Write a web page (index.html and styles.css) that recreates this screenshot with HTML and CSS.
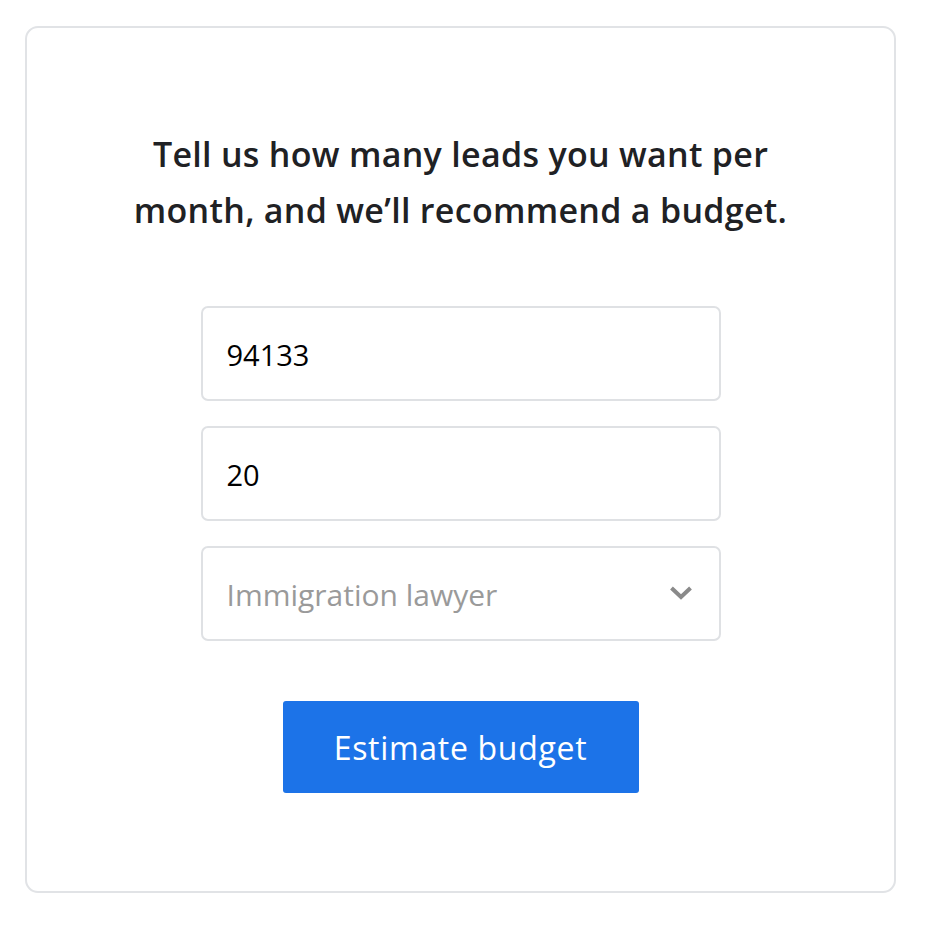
FILE: index.html
```html
<!DOCTYPE html>
<html lang="en">
<head>
<meta charset="utf-8">
<title>Estimate budget</title>
<link rel="stylesheet" href="styles.css">
</head>
<body>
<div class="card">
  <h1 class="title">Tell us how many leads you want per<br>month, and we’ll recommend a budget.</h1>
  <form class="form">
    <div class="field"><span class="value">94133</span></div>
    <div class="field"><span class="value">20</span></div>
    <div class="field select">
      <span class="placeholder">Immigration lawyer</span>
      <svg class="chevron" width="24" height="16" viewBox="0 0 24 16"><path d="M2.5 3 L12 12 L21.5 3" fill="none" stroke="#8a8a8a" stroke-width="4"/></svg>
    </div>
    <button type="button" class="btn">Estimate budget</button>
  </form>
</div>
</body>
</html>
```
FILE: styles.css
```css
html, body {
  margin: 0;
  padding: 0;
  background: #fff;
}
body {
  font-family: "Open Sans", "Noto Sans", sans-serif;
  padding: 26px 0 0 25px;
}
.card {
  box-sizing: border-box;
  width: 871px;
  height: 867px;
  border: 2px solid #e1e3e6;
  border-radius: 13px;
  display: flex;
  flex-direction: column;
  align-items: center;
  padding-top: 98px;
}
.title {
  margin: 0;
  font-size: 34px;
  font-weight: 560;
  line-height: 56px;
  color: #202124;
  text-align: center;
  letter-spacing: 0.3px;
}
.form {
  display: flex;
  flex-direction: column;
  align-items: center;
  gap: 25px;
  margin-top: 68px;
}
.field {
  box-sizing: border-box;
  width: 520px;
  height: 95px;
  border: 2px solid #dfe1e4;
  border-radius: 7px;
  display: flex;
  align-items: center;
  padding: 1px 24px 0;
  font-size: 29px;
}
.value { color: #000; }
.placeholder { color: #9a9a9a; flex: 1; font-size: 30px; }
.chevron { margin-right: 2px; margin-top: -2px; }
.btn {
  margin-top: 35px;
  width: 356px;
  height: 92px;
  border: 0;
  border-radius: 3px;
  background: #1c73e8;
  color: #fff;
  font-family: inherit;
  font-size: 32px;
  font-weight: 500;
  letter-spacing: 0.7px;
}
```
